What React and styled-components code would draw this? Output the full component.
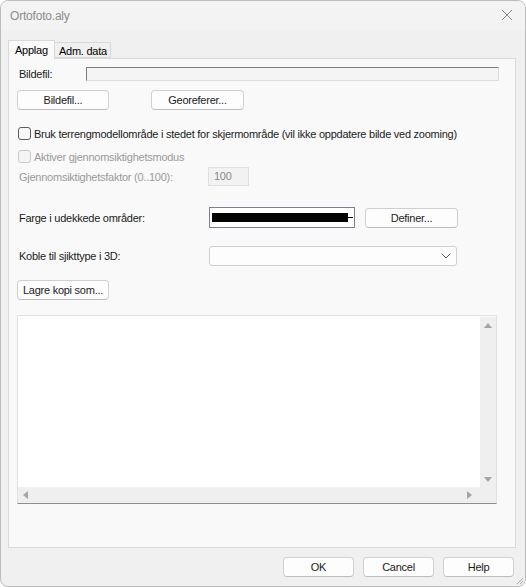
import styled, { createGlobalStyle } from "styled-components";

const GlobalStyle = createGlobalStyle`
  html, body {
    margin: 0;
    padding: 0;
    background: #ffffff;
  }
  body {
    font-family: "Liberation Sans", Arial, sans-serif;
    font-size: 11px;
    letter-spacing: -0.25px;
    color: #1b1b1b;
  }
`;

export default function App() {
  return (
    <>
      <GlobalStyle />
      <Window>
        <TitleBar>
          <Title>Ortofoto.aly</Title>
          <CloseButton aria-label="Lukk">
            <svg width="12" height="12" viewBox="0 0 12 12">
              <path d="M1 1 L11 11 M11 1 L1 11" stroke="#8a8a8a" strokeWidth="1" />
            </svg>
          </CloseButton>
        </TitleBar>

        <Body>
          <TabStrip>
            <Tab $active>Applag</Tab>
            <Tab>Adm. data</Tab>
          </TabStrip>

          <Panel>
            <Row $top={8} $height={14}>
              <Label $width={69}>Bildefil:</Label>
              <PathField />
            </Row>

            <Row $top={9} $height={19}>
              <Button $width={92}>Bildefil...</Button>
              <Button $width={93} $gap={42}>Georeferer...</Button>
            </Row>

            <Row $top={18} $height={13}>
              <Check />
              <CheckText>
                Bruk terrengmodellområde i stedet for skjermområde (vil ikke oppdatere bilde ved zooming)
              </CheckText>
            </Row>

            <Row $top={10} $height={13}>
              <Check $disabled />
              <CheckText $disabled>Aktiver gjennomsiktighetsmodus</CheckText>
            </Row>

            <Row $top={4} $height={19}>
              <Label $width={191} $disabled>Gjennomsiktighetsfaktor (0..100):</Label>
              <NumberField>100</NumberField>
            </Row>

            <Row $top={21} $height={21}>
              <Label $width={192}>Farge i udekkede områder:</Label>
              <ColorSwatch>
                <ColorBar />
                <ColorTail />
              </ColorSwatch>
              <Button $width={93} $gap={10}>Definer...</Button>
            </Row>

            <Row $top={18} $height={20}>
              <Label $width={192}>Koble til sjikttype i 3D:</Label>
              <Combo>
                <svg width="10" height="6" viewBox="0 0 10 6">
                  <path d="M0.5 0.5 L5 5 L9.5 0.5" fill="none" stroke="#5a5a5a" strokeWidth="1" />
                </svg>
              </Combo>
            </Row>

            <Row $top={14} $height={20}>
              <Button $width={92}>Lagre kopi som...</Button>
            </Row>

            <ListBox>
              <ListArea />
              <VScroll>
                <Arrow $dir="up" />
                <Arrow $dir="down" />
              </VScroll>
              <HScroll>
                <Arrow $dir="left" />
                <Arrow $dir="right" />
              </HScroll>
              <ScrollCorner />
            </ListBox>
          </Panel>

          <Footer>
            <Button $width={71}>OK</Button>
            <Button $width={71}>Cancel</Button>
            <Button $width={71}>Help</Button>
          </Footer>
        </Body>

        <Grip width="10" height="10" viewBox="0 0 10 10">
          <path d="M9 3 L3 9 M9 6 L6 9" stroke="#a8a8a8" strokeWidth="1" />
        </Grip>
      </Window>
    </>
  );
}

const Window = styled.div`
  position: relative;
  width: 526px;
  height: 587px;
  box-sizing: border-box;
  border: 1px solid #bcbcbc;
  border-radius: 8px;
  background: #f0f0f0;
  display: flex;
  flex-direction: column;
  overflow: hidden;
`;

const TitleBar = styled.div`
  height: 29px;
  flex: none;
  display: flex;
  align-items: center;
  justify-content: space-between;
  padding: 0 8px 0 9px;
  background: #f3f3f3;
`;

const Title = styled.span`
  font-size: 12px;
  letter-spacing: -0.2px;
  color: #8c8c8c;
`;

const CloseButton = styled.div`
  width: 20px;
  height: 20px;
  display: flex;
  align-items: center;
  justify-content: center;
  margin-top: -2px;
`;

const Body = styled.div`
  flex: 1;
  display: flex;
  flex-direction: column;
  padding: 10px 9px 0 7px;
`;

const TabStrip = styled.div`
  height: 18px;
  display: flex;
  align-items: flex-end;
`;

const Tab = styled.div`
  position: relative;
  z-index: ${(p) => (p.$active ? 1 : 0)};
  box-sizing: border-box;
  height: ${(p) => (p.$active ? "19px" : "16px")};
  margin-bottom: ${(p) => (p.$active ? "-1px" : "0")};
  padding: ${(p) => (p.$active ? "3px 6px 0 6px" : "2px 4px 0 4px")};
  width: ${(p) => (p.$active ? "47px" : "56px")};
  border: 1px solid #d9d9d9;
  border-bottom: ${(p) => (p.$active ? "none" : "1px solid #d9d9d9")};
  border-left: ${(p) => (p.$active ? "1px solid #d9d9d9" : "none")};
  background: ${(p) => (p.$active ? "#f9f9f9" : "#f0f0f0")};
  color: #000;
  white-space: nowrap;
`;

const Panel = styled.div`
  box-sizing: border-box;
  height: 490px;
  border: 1px solid #d9d9d9;
  background: #f9f9f9;
  padding: 0 8px 0 8px;
  display: flex;
  flex-direction: column;
`;

const Row = styled.div`
  display: flex;
  align-items: center;
  flex: none;
  margin-top: ${(p) => p.$top}px;
  height: ${(p) => p.$height}px;
`;

const Label = styled.span`
  flex: none;
  box-sizing: border-box;
  width: ${(p) => p.$width}px;
  padding-left: 2px;
  white-space: nowrap;
  color: ${(p) => (p.$disabled ? "#9a9a9a" : "#1b1b1b")};
`;

const PathField = styled.div`
  box-sizing: border-box;
  width: 413px;
  height: 14px;
  border: 1px solid #dcdcdc;
  border-top-color: #7c7c7c;
  border-left-color: #7c7c7c;
  background: #f4f4f4;
`;

const Button = styled.div`
  flex: none;
  box-sizing: border-box;
  width: ${(p) => p.$width}px;
  height: 20px;
  margin-left: ${(p) => p.$gap || 0}px;
  display: flex;
  align-items: center;
  justify-content: center;
  background: #fdfdfd;
  border: 1px solid #d0d0d0;
  border-bottom-color: #bcbcbc;
  border-radius: 4px;
  color: #1b1b1b;
  white-space: nowrap;
`;

const Check = styled.div`
  flex: none;
  box-sizing: border-box;
  width: 13px;
  height: 13px;
  border: 1px solid ${(p) => (p.$disabled ? "#c9c9c9" : "#5c5c5c")};
  border-radius: 3px;
  background: ${(p) => (p.$disabled ? "#f4f4f4" : "#f7f7f7")};
  margin-left: 1px;
`;

const CheckText = styled.span`
  margin-left: 3px;
  white-space: nowrap;
  color: ${(p) => (p.$disabled ? "#9a9a9a" : "#1b1b1b")};
`;

const NumberField = styled.div`
  box-sizing: border-box;
  width: 41px;
  height: 19px;
  border: 1px solid #e0e0e0;
  background: #f2f2f2;
  color: #8a8a8a;
  padding: 0 0 2px 5px;
  display: flex;
  align-items: center;
`;

const ColorSwatch = styled.div`
  box-sizing: border-box;
  width: 146px;
  height: 21px;
  border: 1px solid #7c7f8c;
  background: #ffffff;
  display: flex;
  align-items: center;
  padding-left: 2px;
`;

const ColorBar = styled.div`
  width: 136px;
  height: 9px;
  background: #000;
`;

const ColorTail = styled.div`
  width: 5px;
  height: 1px;
  background: #000;
`;

const Combo = styled.div`
  box-sizing: border-box;
  width: 248px;
  height: 20px;
  border: 1px solid #cfcfcf;
  border-radius: 3px;
  background: #fdfdfd;
  display: flex;
  align-items: center;
  justify-content: flex-end;
  padding-right: 5px;
`;

const ListBox = styled.div`
  margin-top: 15px;
  box-sizing: border-box;
  width: 480px;
  height: 189px;
  border: 1px solid #e2e2e2;
  border-bottom-color: #8e8e8e;
  background: #ffffff;
  display: grid;
  grid-template-columns: 1fr 16px;
  grid-template-rows: 1fr 16px;
`;

const ListArea = styled.div`
  background: #ffffff;
`;

const VScroll = styled.div`
  background: #efefef;
  display: flex;
  flex-direction: column;
  justify-content: space-between;
  align-items: center;
  padding: 6px 0 5px;
  margin-top: 1px;
`;

const HScroll = styled.div`
  background: #efefef;
  display: flex;
  justify-content: space-between;
  align-items: center;
  padding: 0 8px 0 5px;
`;

const ScrollCorner = styled.div`
  background: #efefef;
`;

const Arrow = styled.div`
  width: 0;
  height: 0;
  ${(p) =>
    p.$dir === "up" &&
    `border-left: 4px solid transparent; border-right: 4px solid transparent; border-bottom: 5px solid #a5a5a5;`}
  ${(p) =>
    p.$dir === "down" &&
    `border-left: 4px solid transparent; border-right: 4px solid transparent; border-top: 5px solid #a5a5a5;`}
  ${(p) =>
    p.$dir === "left" &&
    `border-top: 4px solid transparent; border-bottom: 4px solid transparent; border-right: 5px solid #a5a5a5;`}
  ${(p) =>
    p.$dir === "right" &&
    `border-top: 4px solid transparent; border-bottom: 4px solid transparent; border-left: 5px solid #a5a5a5;`}
`;

const Footer = styled.div`
  display: flex;
  justify-content: flex-end;
  gap: 9px;
  padding-top: 9px;
  margin-right: 2px;
`;

const Grip = styled.svg`
  position: absolute;
  right: 1px;
  bottom: 1px;
`;
